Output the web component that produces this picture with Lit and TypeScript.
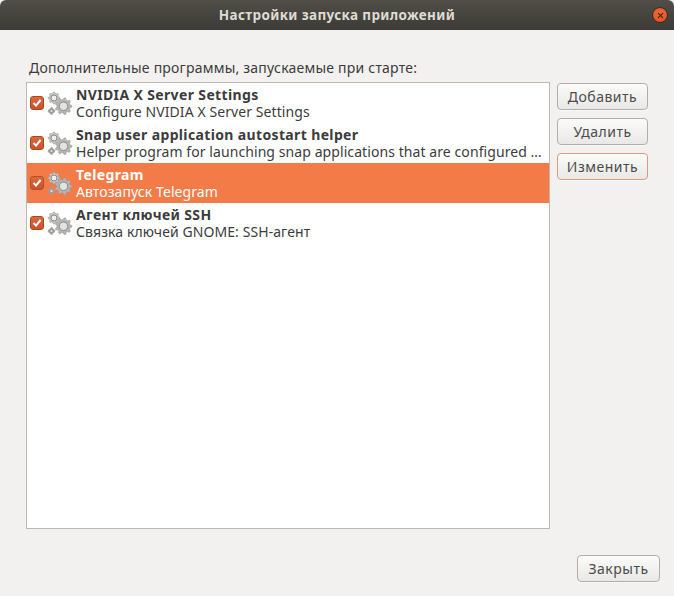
import { LitElement, html, css, svg } from "lit";
import { customElement } from "lit/decorators.js";

function gear(cx: number, cy: number, r: number, teeth: number, fill: string, hub: string) {
  const pts: string[] = [];
  const inner = r * 0.78;
  const n = teeth * 4;
  for (let i = 0; i < n; i++) {
    const a = (i / n) * Math.PI * 2 - Math.PI / teeth / 4;
    const rad = i % 4 < 2 ? r : inner;
    pts.push(`${(cx + rad * Math.cos(a)).toFixed(2)},${(cy + rad * Math.sin(a)).toFixed(2)}`);
  }
  return svg`<polygon points=${pts.join(" ")} fill=${fill} stroke="#9a9a98" stroke-width=".5"/>
    <circle cx=${cx} cy=${cy} r=${r * 0.5} fill=${hub} stroke="#8a8a88" stroke-width="1"/>`;
}

const ITEMS = [
  { t: "NVIDIA X Server Settings", s: "Configure NVIDIA X Server Settings" },
  { t: "Snap user application autostart helper", s: "Helper program for launching snap applications that are configured …" },
  { t: "Telegram", s: "Автозапуск Telegram", sel: true },
  { t: "Агент ключей SSH", s: "Связка ключей GNOME: SSH-агент" },
];

@customElement("app-root")
export class AppRoot extends LitElement {
  static styles = css`
    :host { display: block; width: 674px; height: 596px; background: #f2f1ef; color: #3c3c3c;
      font-family: "Noto Sans", "Open Sans", sans-serif; font-size: 14px; overflow: hidden; }
    .title { height: 30px; box-sizing: border-box; background: linear-gradient(#504e47, #3c3b37);
      border-radius: 6px 6px 0 0; display: flex; align-items: center; justify-content: center;
      position: relative; color: #dfdbd2; font-weight: 700; font-size: 13.5px; letter-spacing: .36px; }
    .close { position: absolute; left: 652px; top: 7px; width: 16px; height: 16px; border-radius: 50%;
      background: radial-gradient(circle at 50% 40%, #f2703f, #dd4814); border: 0.5px solid #33322e;
      box-sizing: border-box; display: flex; align-items: center; justify-content: center; }
    .close svg { display: block; }
    .body { padding: 28px 14px 0 26px; }
    .label { height: 24px; padding-left: 3px; line-height: 20px; letter-spacing: .22px; white-space: nowrap; }
    .main { display: flex; gap: 7px; align-items: flex-start; }
    .list { width: 524px; height: 447px; box-sizing: border-box; background: #fff; border: 1px solid #bdb9b2; }
    .row { height: 40px; display: flex; align-items: center; padding-left: 3px; box-sizing: border-box; }
    .row.sel { background: #f37b48; color: #fff; }
    .check { width: 14px; height: 14px; margin-right: 3px; border-radius: 3px; flex: none; box-sizing: border-box;
      background: linear-gradient(#e0683f, #c9522a); border: 1px solid #a9491f; display: flex;
      align-items: center; justify-content: center; }
    .row.sel .check { border-color: #b5512a; }
    .icon { width: 26px; height: 26px; flex: none; display: block; margin-right: 3px; }
    .txt { min-width: 0; flex: 1; line-height: 17px; padding-right: 4px; margin-top: -1px; }
    .name { font-weight: 700; white-space: nowrap; font-size: 14px; letter-spacing: .36px; }
    .sub { white-space: nowrap; font-size: 14px; letter-spacing: .08px; }
    .side { display: flex; flex-direction: column; gap: 8px; margin-top: 1px; }
    .btn { width: 91px; height: 27px; box-sizing: border-box; border: 1px solid #b2aea7; border-radius: 4px;
      background: linear-gradient(#fbfbfa, #e9e8e6); color: #4c4c4c; font: inherit; padding: 0;
      display: flex; align-items: center; justify-content: center; letter-spacing: .5px;
      box-shadow: 0 1px 0 rgba(255,255,255,.6); }
    .btn.focus { border-color: #d99a80; }
    .foot { display: flex; justify-content: flex-end; padding-top: 26px; }
    .foot .btn { width: 83px; }
  `;

  render() {
    return html`
      <div class="title">Настройки запуска приложений
        <div class="close"><svg width="7" height="7" viewBox="0 0 7 7"><path d="M1 1l5 5M6 1l-5 5" stroke="#4a2616" stroke-width="1.1"/></svg></div>
      </div>
      <div class="body">
        <div class="label">Дополнительные программы, запускаемые при старте:</div>
        <div class="main">
          <div class="list">
            ${ITEMS.map((it) => html`
              <div class="row ${it.sel ? "sel" : ""}">
                <div class="check"><svg width="10" height="10" viewBox="0 0 10 10"><path d="M1.5 5l2.5 2.6L8.6 2" fill="none" stroke="#fff" stroke-width="2"/></svg></div>
                <svg class="icon" viewBox="0 0 26 26">
                  ${gear(7, 8, 6, 8, "#c4c4c2", "#ececea")}
                  ${gear(16.5, 16.3, 8.5, 9, "#b4b4b2", "#e2e2e0")}
                  ${gear(4.5, 21, 3.5, 4, "#a8a8a6", "#dededc")}
                </svg>
                <div class="txt">
                  <div class="name">${it.t}</div>
                  <div class="sub">${it.s}</div>
                </div>
              </div>`)}
          </div>
          <div class="side">
            <div class="btn">Добавить</div>
            <div class="btn">Удалить</div>
            <div class="btn focus">Изменить</div>
          </div>
        </div>
        <div class="foot"><div class="btn">Закрыть</div></div>
      </div>
    `;
  }
}
